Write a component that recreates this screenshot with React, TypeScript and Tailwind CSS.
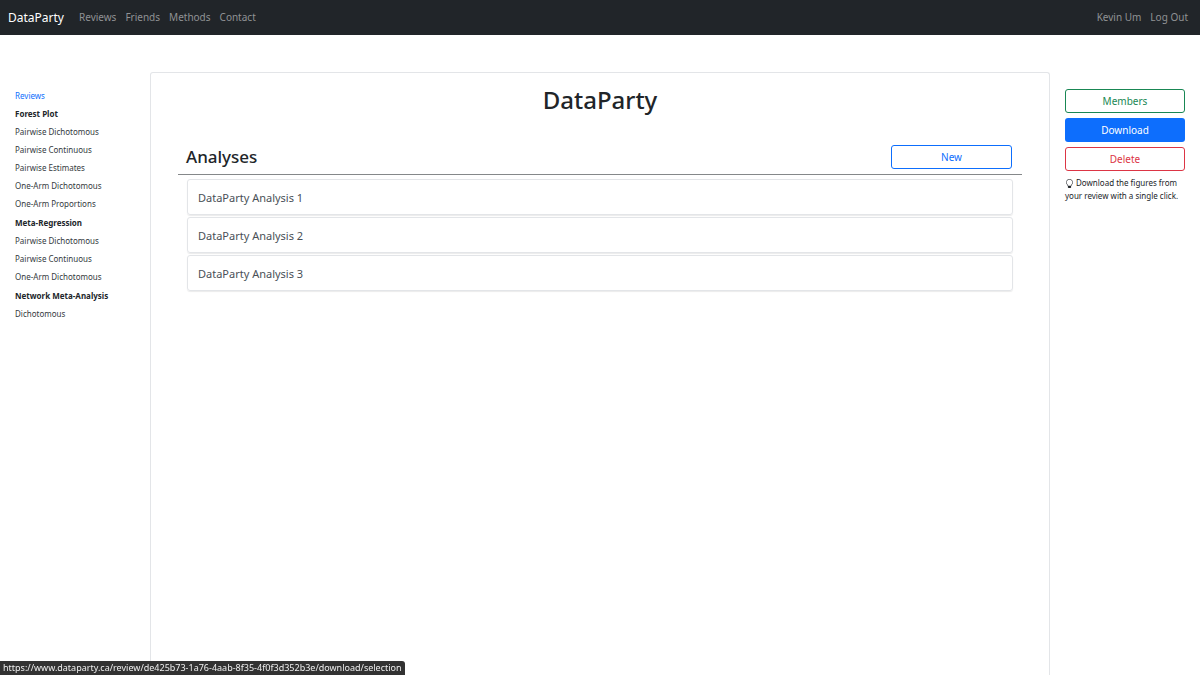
import { BsLightbulb } from 'react-icons/bs';

const navLinks = ['Reviews', 'Friends', 'Methods', 'Contact'];

const menu = [
  { title: 'Forest Plot', items: ['Pairwise Dichotomous', 'Pairwise Continuous', 'Pairwise Estimates', 'One-Arm Dichotomous', 'One-Arm Proportions'] },
  { title: 'Meta-Regression', items: ['Pairwise Dichotomous', 'Pairwise Continuous', 'One-Arm Dichotomous'] },
  { title: 'Network Meta-Analysis', items: ['Dichotomous'] },
];

const analyses = ['DataParty Analysis 1', 'DataParty Analysis 2', 'DataParty Analysis 3'];

function Navbar() {
  return (
    <nav className="flex h-[35px] items-center bg-[#212529] px-2 text-[10px] text-[#909294]">
      <a href="#" className="mr-[15px] text-[12px] text-white">DataParty</a>
      <div className="flex gap-[9px]">
        {navLinks.map((label) => (
          <a key={label} href="#">{label}</a>
        ))}
      </div>
      <div className="ml-auto mr-1 flex gap-[9px]">
        <a href="#">Kevin Um</a>
        <a href="#">Log Out</a>
      </div>
    </nav>
  );
}

function Sidebar() {
  return (
    <aside className="px-[15px] pt-[15px] text-[8px] leading-[18px]">
      <a href="#" className="block text-[#0d6efd]">Reviews</a>
      <div className="flex flex-col gap-px">
        {menu.map((section) => (
          <section key={section.title}>
            <h2 className="font-bold">{section.title}</h2>
            <ul>
              {section.items.map((item) => (
                <li key={item}><a href="#" className="text-[#343a40]">{item}</a></li>
              ))}
            </ul>
          </section>
        ))}
      </div>
    </aside>
  );
}

function Main() {
  return (
    <main className="rounded-t-[3px] border border-b-0 border-[#e3e5e8] px-[27px] pt-[11px]">
      <h1 className="text-center text-[24px] font-medium leading-[32px]">DataParty</h1>
      <div className="mt-[29px] flex items-center justify-between border-b border-[#85888a] pb-[5px] pl-2 pr-[10px]">
        <h2 className="text-[17px] font-medium leading-6">Analyses</h2>
        <button type="button" className="h-6 w-[121px] rounded-[3px] border border-[#0d6efd] text-[10px] text-[#0d6efd]">New</button>
      </div>
      <ul className="mt-1 flex flex-col gap-[2px] px-[9px]">
        {analyses.map((name) => (
          <li key={name}>
            <a href="#" className="flex h-9 items-center rounded-[3px] border border-[#e3e5e8] px-[10px] pt-[2px] text-[11px] text-[#495057] shadow-[0_1px_1px_rgba(0,0,0,0.08)]">{name}</a>
          </li>
        ))}
      </ul>
    </main>
  );
}

function Actions() {
  return (
    <aside className="px-[15px] pt-[17px] text-[10px]">
      <div className="flex flex-col gap-[5px]">
        <button type="button" className="h-6 rounded-[3px] border border-[#198754] text-[#198754]">Members</button>
        <button type="button" className="h-6 rounded-[3px] bg-[#0d6efd] text-white">Download</button>
        <button type="button" className="h-6 rounded-[3px] border border-[#dc3545] text-[#dc3545]">Delete</button>
      </div>
      <p className="mt-[5px] text-[8px] leading-[13px]">
        <BsLightbulb className="mr-[2px] inline size-[9px] align-middle" aria-hidden="true" />
        Download the figures from<br />your review with a single click.
      </p>
    </aside>
  );
}

export default function App() {
  return (
    <div className="flex min-h-screen flex-col bg-white font-['Noto_Sans','Open_Sans',sans-serif] text-[#212529]">
      <Navbar />
      <div className="mt-[37px] grid grow grid-cols-[1fr_6fr_1fr]">
        <Sidebar />
        <Main />
        <Actions />
      </div>
      <div className="fixed bottom-0 left-0 rounded-tr-[3px] bg-[#323232] px-[3px] text-[9px] leading-[14px] text-[#eeeeee]">
        https://www.dataparty.ca/review/de425b73-1a76-4aab-8f35-4f0f3d352b3e/download/selection
      </div>
    </div>
  );
}
